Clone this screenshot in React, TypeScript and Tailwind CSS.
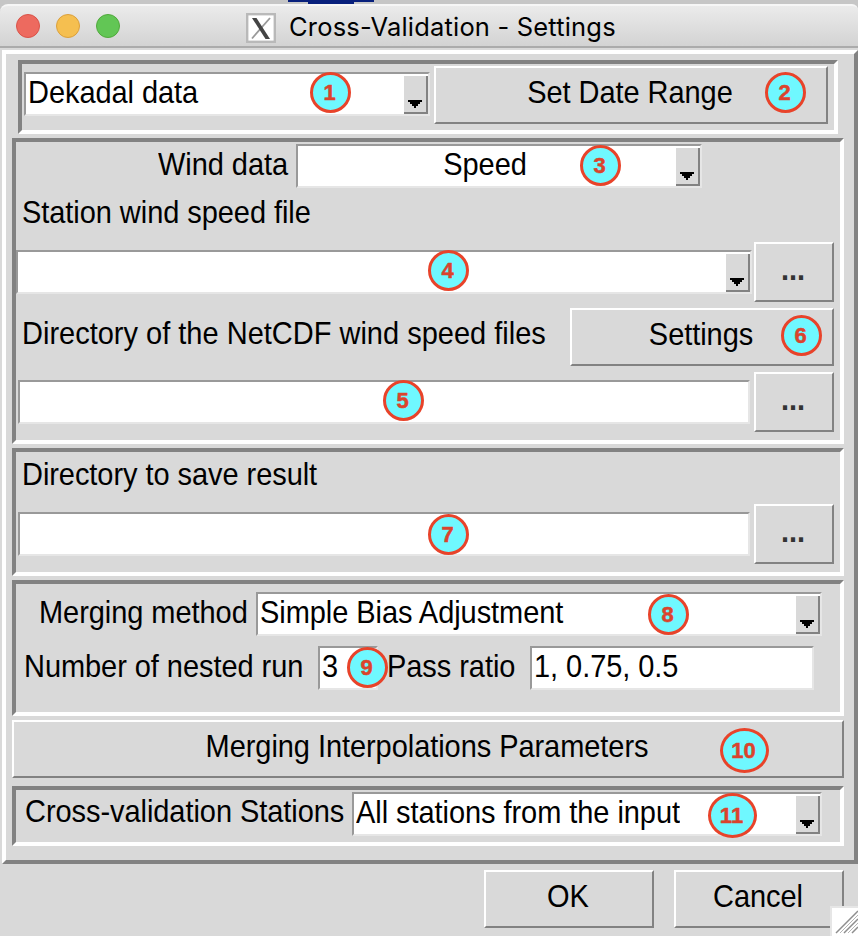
import type { ReactNode } from "react";

type BoxProps = { className?: string; children?: ReactNode };

function Label({ className = "", children }: BoxProps) {
  return (
    <span className={`block shrink-0 origin-center scale-y-[1.08] text-[29px] leading-[36px] tracking-[-0.06px] whitespace-pre ${className}`}>
      {children}
    </span>
  );
}

function Frame({ className = "", children }: BoxProps) {
  return (
    <section className={`border-4 border-t-[#828282] border-r-white border-b-white border-l-[#828282] ${className}`}>
      {children}
    </section>
  );
}

function PushButton({ className = "", children }: BoxProps) {
  return (
    <button
      type="button"
      className={`flex shrink-0 items-center justify-center border-2 border-t-white border-r-[#828282] border-b-[#828282] border-l-white bg-[#d9d9d9] pr-0.5 pb-1.5 ${className}`}
    >
      <Label>{children}</Label>
    </button>
  );
}

function BrowseButton({ className = "" }: BoxProps) {
  return <PushButton className={`h-[60px] w-20 font-bold text-[#333] ${className}`}>...</PushButton>;
}

function Field({ className = "", children }: BoxProps) {
  return (
    <div
      className={`flex h-11 shrink-0 items-center border-2 border-t-[#999999] border-r-[#e6e6e6] border-b-[#e6e6e6] border-l-[#999999] bg-white ${className}`}
    >
      {children}
    </div>
  );
}

function Combo({ className = "", center = false, children }: BoxProps & { center?: boolean }) {
  return (
    <Field className={className}>
      <div className={`flex flex-1 pb-1 pl-0.5 ${center ? "justify-center pr-1.5" : ""}`}>
        <Label>{children}</Label>
      </div>
      <div className="mt-0.5 flex h-[38px] w-6 shrink-0 items-end border-r-2 border-b-2 border-[#828282] bg-[#d9d9d9] pb-1 pl-1">
        <svg width="14" height="8" viewBox="0 0 14 8" shapeRendering="crispEdges">
          <path d="M0 0H14V2H12V4H10V6H8V8H6V6H4V4H2V2H0Z" fill="#000" />
        </svg>
      </div>
    </Field>
  );
}

function Badge({ className, wide = false, children }: { className: string; wide?: boolean; children: ReactNode }) {
  return (
    <span
      className={`absolute flex items-center justify-center rounded-[50%] border-[3px] border-[#e8432a] bg-[#6ff8ff] pr-0.5 text-[22px] leading-none font-bold text-[#db432d] [-webkit-text-stroke:0.5px_#db432d] ${
        wide ? "h-[45px] w-[49px]" : "h-[41px] w-[41px]"
      } ${className}`}
    >
      {children}
    </span>
  );
}

function TitleBar() {
  return (
    <header className="flex h-11 items-center rounded-tl-lg rounded-tr-md border-t-2 border-b-2 border-t-[#f6f6f6] border-b-[#ababab] bg-linear-to-b from-[#ebebeb] to-[#d3d3d3] pl-4">
      <div className="flex gap-4">
        <span className="h-6 w-6 rounded-full border border-[#d95349] bg-[#ed6a5f]" />
        <span className="h-6 w-6 rounded-full border border-[#dba03c] bg-[#f5bf50]" />
        <span className="h-6 w-6 rounded-full border border-[#51a93c] bg-[#62c655]" />
      </div>
      <svg className="mt-1 ml-[126px]" width="30" height="30" viewBox="0 0 30 30">
        <rect x="1.200" y="1.200" width="27.600" height="27.600" fill="#fff" stroke="#b9b9b9" strokeWidth="2.4" />
        <path d="M24 5L6 25.500" stroke="#999" strokeWidth="1.8" />
        <path d="M6 5H10.500L24 26H19.500Z" fill="#444" />
      </svg>
      <h1 className="mt-0.5 ml-[13px] font-[Inter,sans-serif] text-[25.500px] leading-8 tracking-[0.18px] whitespace-pre">
        Cross-Validation - Settings
      </h1>
    </header>
  );
}

export default function App() {
  return (
    <main className="relative h-[936px] w-[858px] overflow-hidden bg-[#d9d9d9] font-['Liberation_Sans',Arial,sans-serif] text-black">
      <div className="bg-[#c6c6c6]">
        <div className="h-1 pl-[288px]">
          <div className="h-0.5 w-[86px] bg-[#08207c]" />
          <div className="ml-5 h-0.5 w-[46px] bg-[#08207c]" />
        </div>
        <TitleBar />
      </div>

      <div className="mt-0.5 ml-0.5 h-[814px] w-[856px] border-4 border-t-white border-r-[#828282] border-b-[#828282] border-l-white pt-1.5 pl-1.5">
        <Frame className="ml-1.5 flex h-[74px] w-[820px] pl-0.5">
          <Combo className="mt-2 w-[406px]">Dekadal data</Combo>
          <PushButton className="mt-0.5 ml-1 h-[58px] w-[394px]">Set Date Range</PushButton>
        </Frame>

        <Frame className="mt-1 h-[306px] w-[832px]">
          <div className="flex h-[46px] pt-0.5">
            <Label className="ml-[142px] w-[138px] pt-0.5">Wind data</Label>
            <Combo center className="w-[406px]">Speed</Combo>
          </div>
          <Label className="mt-1.5 ml-[6px]">Station wind speed file</Label>
          <div className="mt-3 flex">
            <Combo className="mt-2 w-[736px]" />
            <BrowseButton className="ml-0.5" />
          </div>
          <div className="mt-1.5 flex">
            <Label className="mt-2 ml-[6px] w-[548px] tracking-[0px]">Directory of the NetCDF wind speed files</Label>
            <PushButton className="h-[58px] w-[264px]">Settings</PushButton>
          </div>
          <div className="mt-1.5 flex">
            <Field className="mt-2 ml-0.5 w-[732px]" />
            <BrowseButton className="ml-1" />
          </div>
        </Frame>

        <Frame className="mt-1 h-32 w-[832px]">
          <Label className="mt-1 ml-[6px]">Directory to save result</Label>
          <div className="mt-3 flex">
            <Field className="mt-2 ml-0.5 w-[732px]" />
            <BrowseButton className="ml-1" />
          </div>
        </Frame>

        <Frame className="mt-1 h-[136px] w-[832px] pt-2">
          <div className="flex">
            <Label className="ml-[23px] w-[217px] pt-0.5">Merging method</Label>
            <Combo className="w-[566px]">Simple Bias Adjustment</Combo>
          </div>
          <div className="mt-2.5 flex">
            <Label className="ml-[8px] w-[294px] pt-0.5">Number of nested run</Label>
            <Field className="w-[60px] pb-1 pl-0.5">
              <Label>3</Label>
            </Field>
            <Label className="ml-[9px] w-[143px] pt-0.5">Pass ratio</Label>
            <Field className="w-[284px] pb-1 pl-0.5">
              <Label>1, 0.75, 0.5</Label>
            </Field>
          </div>
        </Frame>

        <PushButton className="mt-1 h-[58px] w-[832px]">Merging Interpolations Parameters</PushButton>

        <Frame className="mt-2 flex h-[60px] w-[832px] pt-0.5">
          <Label className="ml-[9px] w-[327px] pt-0.5">Cross-validation Stations</Label>
          <Combo className="w-[470px]">All stations from the input</Combo>
        </Frame>
      </div>

      <footer className="mt-1.5 flex gap-5 pl-[484px]">
        <PushButton className="h-[58px] w-[170px]">OK</PushButton>
        <PushButton className="h-[58px] w-[170px]">Cancel</PushButton>
      </footer>

      <svg className="absolute right-0 bottom-0" width="28" height="30" viewBox="0 0 28 30">
        <rect x="0" y="0" width="28" height="30" fill="#e6e6e6" />
        <rect x="2" y="2" width="26" height="28" fill="#fff" />
        <path d="M6 27L28 5M14 27L28 13M22 27L28 21" stroke="#8e8e8e" strokeWidth="1.5" />
        <path d="M10 27L28 9M18 27L28 17" stroke="#b5b5b5" strokeWidth="1" />
      </svg>

      <Badge className="top-[72px] left-[310px]">1</Badge>
      <Badge className="top-[72px] left-[765px]">2</Badge>
      <Badge className="top-[145px] left-[580px]">3</Badge>
      <Badge className="top-[250px] left-[428px]">4</Badge>
      <Badge className="top-[380px] left-[383px]">5</Badge>
      <Badge className="top-[315px] left-[781px]">6</Badge>
      <Badge className="top-[514px] left-[428px]">7</Badge>
      <Badge className="top-[594px] left-[648px]">8</Badge>
      <Badge className="top-[647px] left-[347px]">9</Badge>
      <Badge wide className="top-[728px] left-[720px]">10</Badge>
      <Badge wide className="top-[793px] left-[708px]">11</Badge>
    </main>
  );
}
